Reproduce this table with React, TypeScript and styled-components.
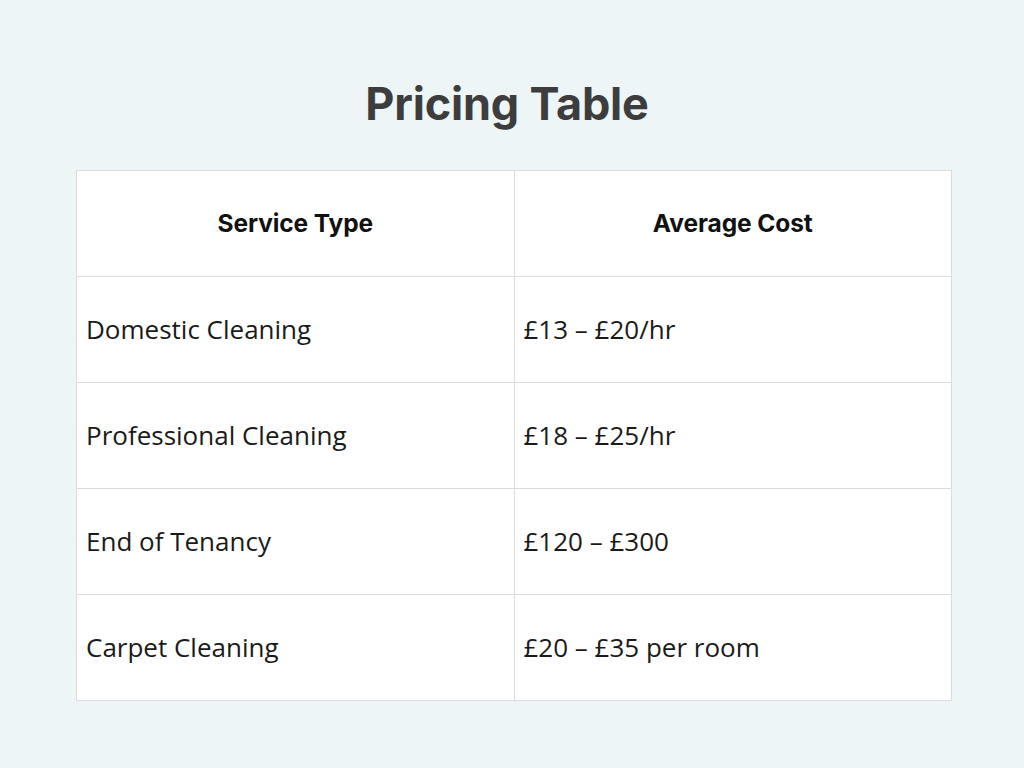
import React from 'react';
import styled, { createGlobalStyle } from 'styled-components';

const GlobalStyle = createGlobalStyle`
  html, body {
    margin: 0;
    padding: 0;
    background: #edf5f7;
  }
`;

const Page = styled.main`
  width: 1024px;
  height: 768px;
  box-sizing: border-box;
  padding-top: 76px;
  display: flex;
  flex-direction: column;
  align-items: center;
`;

const Title = styled.h1`
  margin: 0 0 26px 0;
  height: 68px;
  line-height: 56px;
  font-family: Inter, 'Liberation Sans', sans-serif;
  font-size: 45px;
  font-weight: 700;
  color: #3d3d3d;
  letter-spacing: -0.2px;
  transform: translateX(-5px);
`;

const Table = styled.table`
  width: 876px;
  margin-left: 4px;
  border-collapse: collapse;
  background: #ffffff;
  table-layout: fixed;
`;

const HeadCell = styled.th`
  height: 105px;
  padding: 0;
  border: 1px solid #dcdcdc;
  text-align: center;
  line-height: 1.2;
  font-family: Inter, 'Liberation Sans', sans-serif;
  font-size: 24.5px;
  font-weight: 700;
  color: #111111;
  letter-spacing: -0.1px;
`;

const Cell = styled.td`
  height: 105px;
  padding: 0 0 0 9px;
  border: 1px solid #dcdcdc;
  text-align: left;
  line-height: 1.2;
  font-family: 'Open Sans', 'Liberation Sans', sans-serif;
  font-size: 26px;
  color: #1a1a1a;
`;

const rows = [
  ['Domestic Cleaning', '£13 – £20/hr'],
  ['Professional Cleaning', '£18 – £25/hr'],
  ['End of Tenancy', '£120 – £300'],
  ['Carpet Cleaning', '£20 – £35 per room'],
];

export default function App() {
  return (
    <>
      <GlobalStyle />
      <Page>
        <Title>Pricing Table</Title>
        <Table>
          <thead>
            <tr>
              <HeadCell>Service Type</HeadCell>
              <HeadCell>Average Cost</HeadCell>
            </tr>
          </thead>
          <tbody>
            {rows.map(([service, cost]) => (
              <tr key={service}>
                <Cell>{service}</Cell>
                <Cell>{cost}</Cell>
              </tr>
            ))}
          </tbody>
        </Table>
      </Page>
    </>
  );
}
